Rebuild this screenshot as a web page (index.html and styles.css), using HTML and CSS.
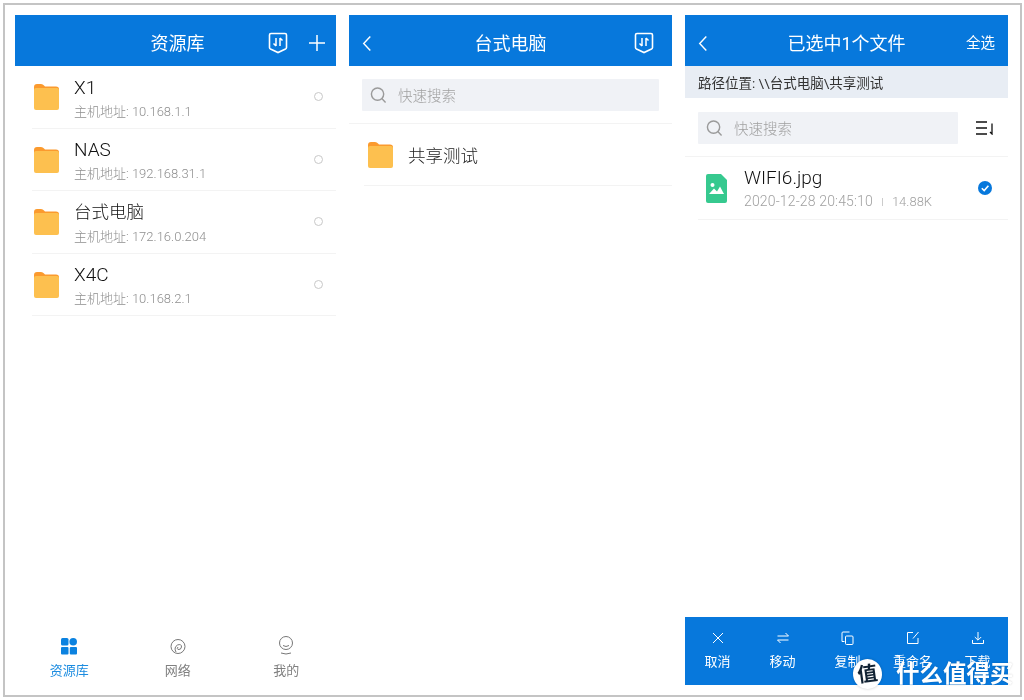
FILE: index.html
```html
<!DOCTYPE html>
<html lang="zh">
<head>
<meta charset="utf-8">
<title>资源库</title>
<link rel="stylesheet" href="styles.css">
</head>
<body>
<svg class="defs" width="0" height="0" aria-hidden="true">
  <defs>
    <symbol id="folder" viewBox="0 0 25 27">
      <path d="M0 4 Q0 1 3 1 H7 Q9 1 10 2.500 L11 3.500 H22 Q25 3.500 25 6 V10 H0 Z" fill="#fb9a2e"/>
      <path d="M0 7 Q0 5 2 5 H23 Q25 5 25 7 V25 Q25 27 23 27 H2 Q0 27 0 25 Z" fill="#fdc04f"/>
    </symbol>
    <symbol id="shield" viewBox="0 0 20 22">
      <path d="M1.500 3 Q1.500 1.500 3 1.500 H17 Q18.500 1.500 18.500 3 V15.500 Q18.500 16.500 17.500 17 L10 20.500 L2.500 17 Q1.500 16.500 1.500 15.500 Z" fill="none" stroke="#fff" stroke-width="1.600"/>
      <path d="M8 6 V14 M5.500 11.500 L8 14 M12 14 V6 M14.500 8.500 L12 6" fill="none" stroke="#fff" stroke-width="1.500"/>
    </symbol>
    <symbol id="back" viewBox="0 0 10 18">
      <path d="M8.500 1.500 L1.500 9 L8.500 16.500" fill="none" stroke="#fff" stroke-width="1.500"/>
    </symbol>
    <symbol id="search" viewBox="0 0 18 18">
      <circle cx="8" cy="8" r="6.500" fill="none" stroke="#9a9a9a" stroke-width="1.500"/>
      <path d="M12.500 12.800 L16.500 17" stroke="#9a9a9a" stroke-width="1.500" fill="none"/>
    </symbol>
  </defs>
</svg>
<main class="frame">
  <section class="panel">
    <header class="bar">
      <h1 class="bar-title title-offset">资源库</h1>
      <svg class="shield shield-first"><use href="#shield"/></svg>
      <svg class="plus" viewBox="0 0 18 18"><path d="M9 1 V17 M1 9 H17" stroke="#fff" stroke-width="1.500" fill="none"/></svg>
    </header>
    <ul class="hosts">
      <li class="host">
        <svg class="folder"><use href="#folder"/></svg>
        <div class="host-text"><div class="name">X1</div><div class="sub">主机地址: 10.168.1.1</div></div>
        <span class="radio"></span>
      </li>
      <li class="host">
        <svg class="folder"><use href="#folder"/></svg>
        <div class="host-text"><div class="name">NAS</div><div class="sub">主机地址: 192.168.31.1</div></div>
        <span class="radio"></span>
      </li>
      <li class="host">
        <svg class="folder"><use href="#folder"/></svg>
        <div class="host-text"><div class="name name-cjk">台式电脑</div><div class="sub">主机地址: 172.16.0.204</div></div>
        <span class="radio"></span>
      </li>
      <li class="host">
        <svg class="folder"><use href="#folder"/></svg>
        <div class="host-text"><div class="name">X4C</div><div class="sub">主机地址: 10.168.2.1</div></div>
        <span class="radio"></span>
      </li>
    </ul>
    <nav class="tabs">
      <div class="tab tab-active">
        <svg class="tab-icon" viewBox="0 0 16 17"><rect x="0" y="0" width="7.500" height="7.500" rx="1.500" fill="#0b82e0"/><circle cx="12.200" cy="3.800" r="3.800" fill="#0b82e0"/><rect x="0" y="9" width="7.500" height="7.500" rx="1" fill="#0b82e0"/><rect x="8.800" y="9" width="7.200" height="7.500" rx="1" fill="#0b82e0"/></svg>
        <span>资源库</span>
      </div>
      <div class="tab">
        <svg class="tab-icon" viewBox="0 0 16 17"><circle cx="8" cy="8.500" r="7" fill="none" stroke="#777" stroke-width="1"/><path d="M6 14 Q3.500 9.500 7.500 7 Q11.500 5.500 11.500 9 Q11 12 8 11.500 Q6.500 10.500 8 9" fill="none" stroke="#777" stroke-width="1"/></svg>
        <span>网络</span>
      </div>
      <div class="tab">
        <svg class="tab-icon tab-icon-me" viewBox="0 0 16 20"><circle cx="8" cy="7" r="6.500" fill="none" stroke="#777" stroke-width="1"/><path d="M5 9.500 Q8 11.500 11 9.500 M3 17 Q8 19 13 17" fill="none" stroke="#777" stroke-width="1"/></svg>
        <span>我的</span>
      </div>
    </nav>
  </section>

  <section class="panel">
    <header class="bar">
      <svg class="back"><use href="#back"/></svg>
      <h1 class="bar-title">台式电脑</h1>
      <svg class="shield"><use href="#shield"/></svg>
    </header>
    <div class="search-row">
      <div class="search"><svg class="search-icon"><use href="#search"/></svg><span>快速搜索</span></div>
    </div>
    <div class="folder-row">
      <svg class="folder"><use href="#folder"/></svg>
      <span class="folder-name">共享测试</span>
    </div>
  </section>

  <section class="panel">
    <header class="bar">
      <svg class="back"><use href="#back"/></svg>
      <h1 class="bar-title">已选中1个文件</h1>
      <span class="bar-action">全选</span>
    </header>
    <div class="path">路径位置: \\台式电脑\共享测试</div>
    <div class="search-row search-row-tall">
      <div class="search search-short"><svg class="search-icon"><use href="#search"/></svg><span>快速搜索</span></div>
      <svg class="sort" viewBox="0 0 18 14"><path d="M0 1 H11 M0 7 H11 M0 13 H11" stroke="#111" stroke-width="1.600" fill="none"/><path d="M16 2.500 V13 L14 11" stroke="#111" stroke-width="1.300" fill="none"/></svg>
    </div>
    <div class="file-row">
      <svg class="file-icon" viewBox="0 0 21 29"><path d="M2 0 H15 L21 6 V27 Q21 29 19 29 H2 Q0 29 0 27 V2 Q0 0 2 0 Z" fill="#36c98f"/><circle cx="6.500" cy="11" r="2" fill="#fff"/><path d="M3 20 L8 14.500 L11 17.500 L14 12.500 L18 20 Z" fill="#fff"/></svg>
      <div class="file-text">
        <div class="name">WIFI6.jpg</div>
        <div class="meta">2020-12-28 20:45:10<i class="sep"></i><span class="size">14.88K</span></div>
      </div>
      <svg class="check" viewBox="0 0 14 14"><circle cx="7" cy="7" r="7" fill="#0778dc"/><path d="M3.800 7.200 L6.200 9.600 L10.400 4.800" fill="none" stroke="#fff" stroke-width="1.600"/></svg>
    </div>
    <nav class="actions">
      <div class="action">
        <svg class="action-icon" viewBox="0 0 14 14"><path d="M2 2 L12 12 M12 2 L2 12" stroke="#fff" stroke-width="1" fill="none"/></svg>
        <span>取消</span>
      </div>
      <div class="action">
        <svg class="action-icon" viewBox="0 0 14 14"><path d="M1.500 5 H12.500 L9.500 2 M12.500 9 H1.500 L4.500 12" stroke="#fff" stroke-width="1" fill="none"/></svg>
        <span>移动</span>
      </div>
      <div class="action">
        <svg class="action-icon" viewBox="0 0 14 14"><path d="M8.500 1 H2 Q1 1 1 2 V10.500 H3.500" stroke="#fff" stroke-width="1" fill="none"/><rect x="4.500" y="5" width="7.500" height="8.500" rx="1" stroke="#fff" stroke-width="1" fill="none"/></svg>
        <span>复制</span>
      </div>
      <div class="action">
        <svg class="action-icon" viewBox="0 0 14 14"><path d="M7 1.500 H1.500 V12.500 H12 V7 M7 7.500 L12.500 1" stroke="#fff" stroke-width="1" fill="none"/></svg>
        <span>重命名</span>
      </div>
      <div class="action">
        <svg class="action-icon" viewBox="0 0 14 14"><path d="M7 1 V9 M3.800 6 L7 9.200 L10.200 6 M1.500 9 V12.500 H12.500 V9" stroke="#fff" stroke-width="1" fill="none"/></svg>
        <span>下载</span>
      </div>
    </nav>
  </section>
  <div class="watermark"><span class="seal">值</span><span class="wm-text">什么值得买</span></div>
</main>
</body>
</html>
```

FILE: styles.css
```css
* { box-sizing: border-box; }
html, body { margin: 0; padding: 0; background: #fff; }
body {
  height: 700px;
  overflow: hidden;
  font-family: Roboto, "Noto Sans CJK SC", sans-serif;
  color: #222;
}
.defs { position: absolute; }
.frame {
  position: relative;
  display: flex;
  gap: 13px;
  width: 1019px;
  height: 694px;
  margin: 3px 0 0 3px;
  padding: 10px 11px 9px 10px;
  border: 2px solid #c4c4c4;
  background: #fff;
  filter: blur(0.35px);
}
.panel {
  position: relative;
  display: flex;
  flex-direction: column;
  width: 323px;
  height: 670px;
}
.panel:first-child { width: 321px; }
.bar {
  position: relative;
  flex: none;
  display: flex;
  align-items: center;
  justify-content: center;
  height: 51px;
  background: #0778dc;
  color: #fff;
}
.bar-title {
  margin: 0;
  font-size: 18px;
  font-weight: 400;
  line-height: 1;
  padding-top: 7px;
}
.title-offset { margin-left: 4px; }
.shield { position: absolute; right: 18px; top: 17px; width: 20px; height: 22px; }
.shield-first { right: 48px; }
.plus { position: absolute; right: 10px; top: 19px; width: 18px; height: 18px; }
.back { position: absolute; left: 13px; top: 20px; width: 10px; height: 17px; }
.bar-action { position: absolute; right: 13px; top: 19px; font-size: 14.500px; line-height: 20px; }

.hosts { list-style: none; margin: 0; padding: 0; flex: 1; }
.host {
  display: flex;
  align-items: center;
  height: 62.500px;
  margin-left: 17px;
  padding-left: 2px;
  border-bottom: 1px solid #f3f3f3;
}
.folder { flex: none; width: 25px; height: 27px; }
.host-text { margin-left: 15px; flex: 1; padding-top: 4px; }
.name { font-size: 19px; line-height: 23px; color: #111; font-weight: 300; }
.name-cjk { font-size: 17.500px; }
.sub { font-size: 13px; line-height: 20px; padding-top: 3px; color: #8f8f8f; font-weight: 300; }
.radio {
  flex: none;
  width: 9px;
  height: 9px;
  margin-right: 13px;
  border: 1.500px solid #c8c8c8;
  border-radius: 50%;
}
.tabs {
  display: grid;
  grid-template-columns: repeat(3, 108.500px);
  flex: none;
  height: 68px;
  padding-top: 21px;
}
.tab {
  display: flex;
  flex-direction: column;
  align-items: center;
  gap: 7px;
  font-size: 13px;
  line-height: 18px;
  color: #808080;
}
.tab-active { color: #1c8ce0; }
.tab-icon { width: 16px; height: 17px; }
.tab-icon-me { width: 16px; height: 20px; margin-top: -2px; margin-bottom: -1px; }

.search-row {
  flex: none;
  display: flex;
  align-items: center;
  height: 58px;
  padding: 0 13px;
  border-bottom: 1px solid #f3f3f3;
}
.search-row-tall { height: 59px; padding-top: 1px; }
.search {
  display: flex;
  align-items: center;
  gap: 11px;
  width: 298px;
  height: 32px;
  padding-left: 8px;
  background: #f0f2f6;
  border-radius: 1px;
  font-size: 14.500px;
  color: #a0a0a0;
  font-weight: 300;
}
.search-short { width: 260px; }
.search-icon { width: 17px; height: 18px; }
.folder-row {
  flex: none;
  display: flex;
  align-items: center;
  gap: 15px;
  height: 62px;
  margin-left: 15px;
  padding-left: 4px;
  border-bottom: 1px solid #f3f3f3;
}
.folder-name { font-size: 17.500px; color: #222; font-weight: 300; }
.path {
  flex: none;
  height: 32px;
  padding-left: 13px;
  background: #e8edf4;
  font-size: 13.500px;
  line-height: 34px;
  color: #333;
}
.sort { flex: none; width: 18px; height: 14px; margin-left: 18px; }
.file-row {
  flex: none;
  display: flex;
  align-items: center;
  height: 63px;
  margin-left: 13px;
  padding-left: 8px;
  border-bottom: 1px solid #f3f3f3;
}
.file-icon { flex: none; width: 21px; height: 29px; }
.file-text { flex: 1; margin-left: 17px; padding-top: 3px; }
.file-text .name { font-size: 19px; line-height: 24px; }
.meta { font-size: 14px; line-height: 22px; letter-spacing: 0.150px; color: #a0a0a0; font-weight: 300; }
.size { font-size: 13px; letter-spacing: 0; }
.sep { display: inline-block; width: 1px; height: 8px; margin: 0 9px; background: #ccc; }
.check { flex: none; width: 14px; height: 14px; margin-right: 16px; }
.actions {
  display: grid;
  grid-template-columns: repeat(5, 65px);
  flex: none;
  height: 68px;
  margin-top: auto;
  padding-top: 14px;
  background: #0778dc;
  color: #fff;
}
.action {
  display: flex;
  flex-direction: column;
  align-items: center;
  gap: 8px;
  font-size: 13px;
  line-height: 18px;
}
.action-icon { width: 14px; height: 14px; }
.watermark {
  position: absolute;
  left: 848px;
  top: 654px;
  display: flex;
  align-items: center;
  gap: 14px;
}
.seal {
  display: block;
  width: 29px;
  height: 30px;
  border-radius: 50%;
  background: #fff;
  color: #123;
  font-size: 20px;
  line-height: 30px;
  text-align: center;
  font-weight: 700;
  box-shadow: 0 0 3px rgba(0, 0, 0, 0.2);
  transform: rotate(-8deg);
}
.wm-text {
  color: #fff;
  font-size: 23.500px;
  line-height: 30px;
  font-weight: 700;
  white-space: nowrap;
  text-shadow: 0 0 2px rgba(0, 0, 0, 0.2);
}
```
